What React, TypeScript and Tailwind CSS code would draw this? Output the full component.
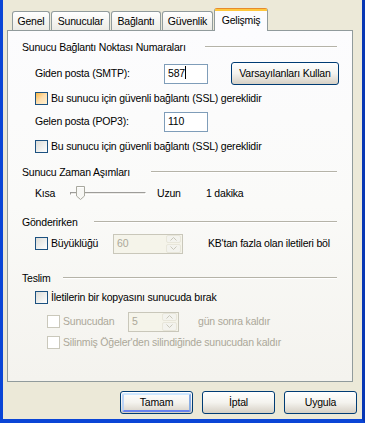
import React from "react";

const font = "font-['Tahoma','Liberation_Sans',Arial,sans-serif] text-[10.5px] tracking-[-0.2px] leading-none";

function Check({ hot = false, disabled = false }: { hot?: boolean; disabled?: boolean }) {
  const cls = disabled
    ? "border-[#CAC8BB] bg-[#FFFFFF]"
    : hot
      ? "border-[#1C5180] bg-gradient-to-br from-[#F8B636] via-[#FEDFB0] to-[#FEF0D0]"
      : "border-[#1C5180] bg-gradient-to-br from-[#DCDCD7] to-[#FFFFFF]";
  return <div className={`w-[13px] h-[13px] border shrink-0 ${cls}`} />;
}

function Field({ value, w, disabled = false, spin = false, caret = false }: { value: string; w: string; disabled?: boolean; spin?: boolean; caret?: boolean }) {
  return (
    <div
      className={`${w} h-[20px] border flex items-center pl-[3px] ${
        disabled ? "border-[#C9C7BA] bg-[#F5F4EA] text-[#ACA899]" : "border-[#7F9DB9] bg-white text-black"
      }`}
    >
      <span className="flex-1">
        {value}
        {caret && <span className="inline-block w-px h-[13px] bg-black align-middle -mt-[2px]" />}
      </span>
      {spin && (
        <div className="w-[15px] h-[18px] mr-px flex flex-col gap-px">
          <div className="flex-1 bg-[#F3F3EE] border border-[#E8E6DA] rounded-[2px] flex items-center justify-center">
            <svg width="7" height="4" viewBox="0 0 7 4"><path d="M0.5 3.5 L3.5 0.5 L6.5 3.5" stroke="#C9C7BA" fill="none" /></svg>
          </div>
          <div className="flex-1 bg-[#F3F3EE] border border-[#E8E6DA] rounded-[2px] flex items-center justify-center">
            <svg width="7" height="4" viewBox="0 0 7 4"><path d="M0.5 0.5 L3.5 3.5 L6.5 0.5" stroke="#C9C7BA" fill="none" /></svg>
          </div>
        </div>
      )}
    </div>
  );
}

function Btn({ label, w, def = false }: { label: string; w: string; def?: boolean }) {
  return (
    <div className={`${w} h-[23px] rounded-[3px] border border-[#003C74] bg-gradient-to-b from-[#FFFFFF] via-[#F4F3EE] to-[#D6D0C5] p-px`}>
      <div
        className={`w-full h-full rounded-[2px] flex items-center justify-center text-black ${
          def ? "border-2 border-t-[#CEE7FF] border-l-[#BCD4F6] border-r-[#89ADE4] border-b-[#6982EE]" : ""
        }`}
      >
        {label}
      </div>
    </div>
  );
}

// static label followed by an etched line starting at a fixed x
function Header({ label, w }: { label: string; w: string }) {
  return (
    <div className="h-[14px] flex items-center pl-[14px] pr-[15px]">
      <span className={`${w} text-black whitespace-nowrap`}>{label}</span>
      <div className="flex-1 h-[2px] border-t border-[#B5B3A8] border-b border-b-white" />
    </div>
  );
}

export default function App() {
  const tabs = [
    { label: "Genel", w: "w-[38px]" },
    { label: "Sunucular", w: "w-[59px]" },
    { label: "Bağlantı", w: "w-[50px]" },
    { label: "Güvenlik", w: "w-[51px]" },
  ];
  return (
    <div className={`w-[365px] h-[423px] bg-[#ECE9D8] border-l-[3px] border-r-[3px] border-b-[4px] border-[#0A45D6] border-r-[#0737B5] flex flex-col ${font}`}>
      {/* tabs */}
      <div className="h-[30px] flex items-end pl-[9px]">
        {tabs.map((t) => (
          <div
            key={t.label}
            className={`${t.w} h-[19px] mr-px border border-b-0 border-[#919B9C] rounded-t-[3px] bg-gradient-to-b from-[#FFFFFF] to-[#ECEBE5] flex items-center justify-center text-black`}
          >
            {t.label}
          </div>
        ))}
        <div className="w-[54px] h-[23px] -mb-px relative z-10 border border-b-0 border-[#919B9C] border-t-[#E68B2C] rounded-t-[3px] bg-[#FCFCFE] flex flex-col">
          <div className="h-[2px] bg-[#FFC73C]" />
          <div className="flex-1 flex items-center justify-center text-black pb-[2px]">Gelişmiş</div>
        </div>
      </div>

      {/* panel */}
      <div className="ml-[4px] w-[346px] h-[352px] border border-[#919B9C] bg-gradient-to-b from-[#FCFCFE] via-[#FAFAF8] to-[#F4F3EE] flex flex-col">
        <div className="mt-[9px]">
          <Header label="Sunucu Bağlantı Noktası Numaraları" w="w-[183px]" />
        </div>
        <div className="mt-[8px] h-[23px] flex items-center pl-[27px]">
          <span className="w-[129px]">Giden posta (SMTP):</span>
          <Field value="587" w="w-[44px]" caret />
          <div className="ml-[23px]">
            <Btn label="Varsayılanları Kullan" w="w-[108px]" />
          </div>
        </div>
        <div className="mt-[6px] h-[14px] flex items-center pl-[27px] gap-[3px]">
          <Check hot />
          <span>Bu sunucu için güvenli bağlantı (SSL) gereklidir</span>
        </div>
        <div className="mt-[6px] h-[21px] flex items-center pl-[27px]">
          <span className="w-[129px]">Gelen posta (POP3):</span>
          <Field value="110" w="w-[44px]" />
        </div>
        <div className="mt-[7px] h-[14px] flex items-center pl-[27px] gap-[3px]">
          <Check />
          <span>Bu sunucu için güvenli bağlantı (SSL) gereklidir</span>
        </div>

        <div className="mt-[12px]">
          <Header label="Sunucu Zaman Aşımları" w="w-[129px]" />
        </div>
        <div className="mt-[6px] h-[16px] flex items-center pl-[27px]">
          <span className="w-[35px]">Kısa</span>
          <div className="relative w-[76px] h-[16px] flex items-center">
            <div className="w-full h-[3px] border border-[#9D9C99] border-b-white border-r-white bg-[#ECEBE6]" />
            <svg className="absolute left-[6px] top-[1px]" width="9" height="14" viewBox="0 0 9 14">
              <path d="M0.5 0.5 H8.5 V10 L4.5 13.5 L0.5 10 Z" fill="#F7F7F4" stroke="#A8A89E" />
              <path d="M1.5 1.5 H7.5" stroke="#FFFFFF" />
            </svg>
          </div>
          <span className="ml-[11px] w-[49px]">Uzun</span>
          <span>1 dakika</span>
        </div>

        <div className="mt-[14px]">
          <Header label="Gönderirken" w="w-[72px]" />
        </div>
        <div className="mt-[4px] h-[21px] flex items-center pl-[27px]">
          <Check />
          <span className="ml-[3px] w-[62px]">Büyüklüğü</span>
          <Field value="60" w="w-[70px]" disabled spin />
          <span className="ml-[25px]">KB'tan fazla olan iletileri böl</span>
        </div>

        <div className="mt-[17px]">
          <Header label="Teslim" w="w-[41px]" />
        </div>
        <div className="mt-[5px] h-[14px] flex items-center pl-[27px] gap-[3px]">
          <Check />
          <span>İletilerin bir kopyasını sunucuda bırak</span>
        </div>
        <div className="mt-[7px] h-[21px] flex items-center pl-[39px] text-[#ACA899]">
          <Check disabled />
          <span className="ml-[3px] w-[65px]">Sunucudan</span>
          <Field value="5" w="w-[51px]" disabled spin />
          <span className="ml-[19px]">gün sonra kaldır</span>
        </div>
        <div className="mt-[3px] h-[14px] flex items-center pl-[39px] gap-[3px] text-[#ACA899]">
          <Check disabled />
          <span>Silinmiş Öğeler'den silindiğinde sunucudan kaldır</span>
        </div>
      </div>

      {/* buttons */}
      <div className="mt-[9px] flex justify-end gap-[9px] pr-[5px]">
        <Btn label="Tamam" w="w-[73px]" def />
        <Btn label="İptal" w="w-[73px]" />
        <Btn label="Uygula" w="w-[73px]" />
      </div>
    </div>
  );
}
